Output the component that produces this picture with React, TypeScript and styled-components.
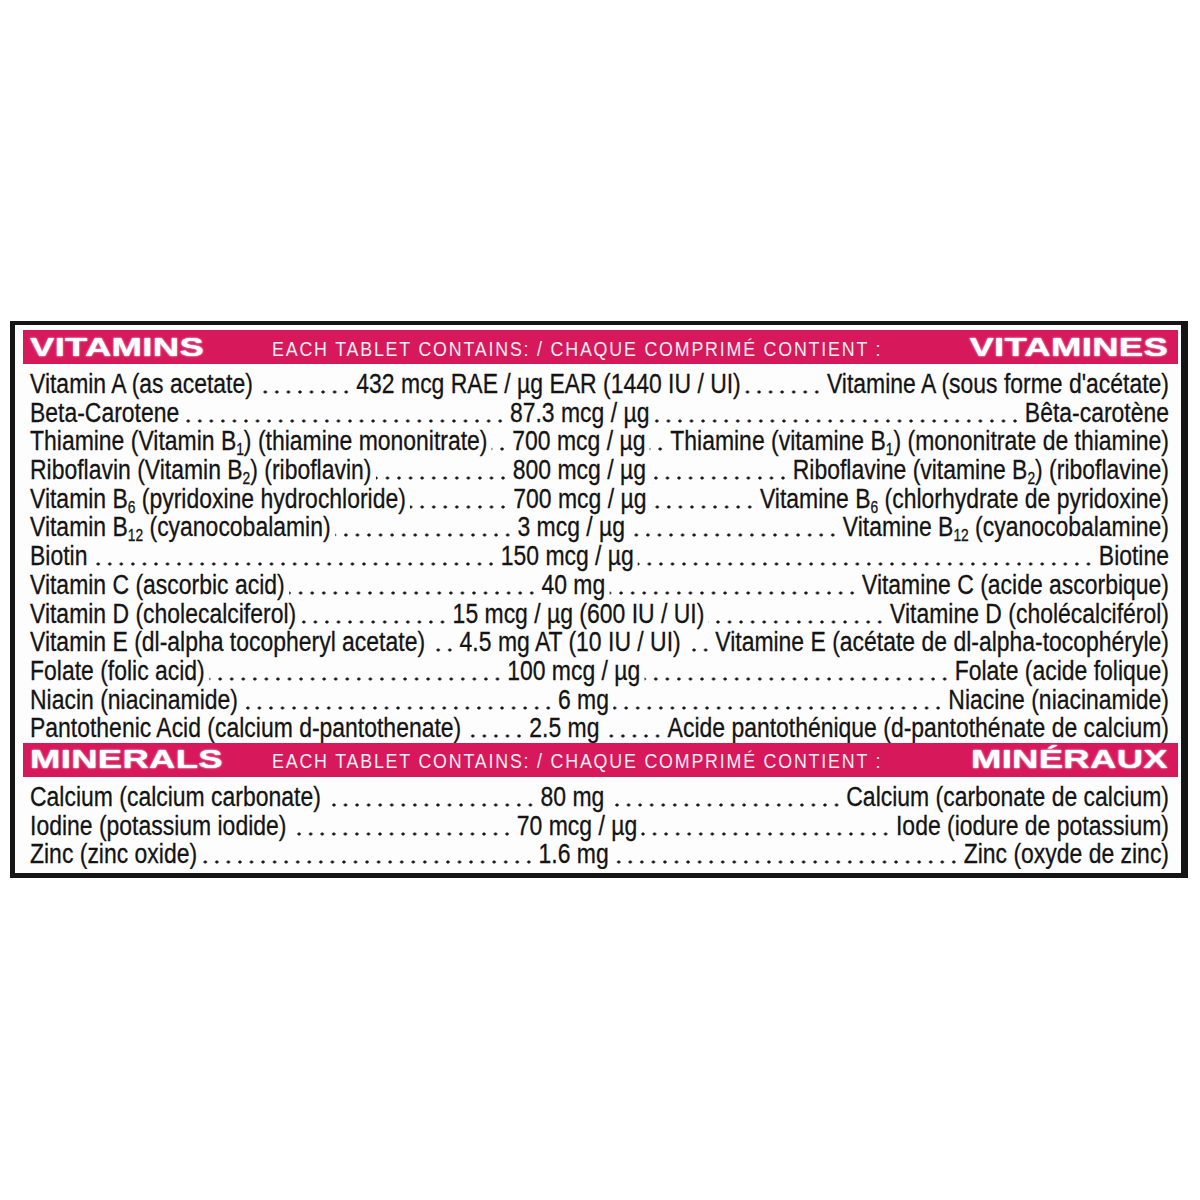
import React from 'react';
import styled, { createGlobalStyle } from 'styled-components';

const GlobalStyle = createGlobalStyle`
	body {
		margin: 0;
		background: #fff;
	}
`;

const PINK = '#d7185b';
const SANS = `'Liberation Sans', Arial, Helvetica, sans-serif`;
const SQUEEZE = 0.85; // condensed face is not installed, so the body type is narrowed by hand
const ROWS_WIDTH = 1139;

const Page = styled.div`
	width: 1200px;
	height: 1200px;
	padding: 321px 0 0 10px;
	box-sizing: border-box;
	background: #fff;
	overflow: hidden;
`;

const Panel = styled.div`
	width: 1178px;
	box-sizing: border-box;
	border: 5px solid #151515;
	border-right-width: 7px;
	border-top-width: 4px;
	padding: 5px 3px 4px 8px;
	background: #fdfdfd;
	font-family: ${SANS};
	color: #141414;
`;

const Header = styled.div`
	height: 34px;
	background: ${PINK};
	display: flex;
	align-items: center;
	padding: 0 10px 0 7px;
	color: #fff;
	overflow: hidden;
`;

const Title = styled.div<{ $right?: boolean }>`
	flex: none;
	width: ${(p) => (p.$right ? 'auto' : '242px')};
	margin-left: ${(p) => (p.$right ? 'auto' : '0')};
	font-family: ${SANS};
	font-weight: 900;
	font-size: 25px;
	line-height: 1;
	letter-spacing: 0.2px;
	transform: scaleX(1.46);
	transform-origin: ${(p) => (p.$right ? 'right center' : 'left center')};
	text-shadow: 0 0 1px rgba(255, 255, 255, 0.9), 0 0 2px rgba(255, 220, 235, 0.7);
	white-space: nowrap;
`;

const Subtitle = styled.div`
	flex: none;
	font-size: 21px;
	letter-spacing: 2.1px;
	line-height: 1;
	color: #fbeef3;
	white-space: nowrap;
	padding-top: 2px;
	transform: scaleX(${SQUEEZE});
	transform-origin: left center;
`;

const Rows = styled.div`
	padding: 6px 10px 0 7px;
	overflow: hidden;
`;

const Squeezed = styled.div`
	width: ${ROWS_WIDTH / SQUEEZE}px;
	transform: scaleX(${SQUEEZE});
	transform-origin: left top;
`;

const Row = styled.div`
	display: flex;
	align-items: stretch;
	height: 28.7px;
	font-size: 27px;
	line-height: 28.7px;
	white-space: nowrap;
	-webkit-text-stroke: 0.3px #141414;
`;

const Cell = styled.span`
	flex: none;
`;

const Leader = styled.span<{ $grow: number }>`
	flex: ${(p) => p.$grow} 1 0;
	min-width: 0;
	margin: 0 5px;
	background-image: radial-gradient(ellipse 2.1px 1.75px at center, #161616 78%, transparent 100%);
	background-size: 13.6px 6px;
	background-repeat: repeat-x;
	background-position: right 0 top 19px;
`;

const Sub = styled.sub`
	font-size: 0.6em;
	vertical-align: -0.28em;
	line-height: 0;
`;

interface Item {
	name: React.ReactNode;
	amount: string;
	nom: React.ReactNode;
	lead?: number;
}

const vitamins: Item[] = [
	{ name: 'Vitamin A (as acetate)', amount: '432 mcg RAE / µg EAR (1440 IU / UI)', nom: "Vitamine A (sous forme d'acétate)", lead: 1.1 },
	{ name: 'Beta-Carotene', amount: '87.3 mcg / µg', nom: 'Bêta-carotène', lead: 0.935 },
	{
		name: <>Thiamine (Vitamin B<Sub>1</Sub>) (thiamine mononitrate)</>,
		amount: '700 mcg / µg',
		nom: <>Thiamine (vitamine B<Sub>1</Sub>) (mononitrate de thiamine)</>
	},
	{
		name: <>Riboflavin (Vitamin B<Sub>2</Sub>) (riboflavin)</>,
		amount: '800 mcg / µg',
		nom: <>Riboflavine (vitamine B<Sub>2</Sub>) (riboflavine)</>,
		lead: 0.98
	},
	{
		name: <>Vitamin B<Sub>6</Sub> (pyridoxine hydrochloride)</>,
		amount: '700 mcg / µg',
		nom: <>Vitamine B<Sub>6</Sub> (chlorhydrate de pyridoxine)</>,
		lead: 0.97
	},
	{
		name: <>Vitamin B<Sub>12</Sub> (cyanocobalamin)</>,
		amount: '3 mcg / µg',
		nom: <>Vitamine B<Sub>12</Sub> (cyanocobalamine)</>,
		lead: 0.92
	},
	{ name: 'Biotin', amount: '150 mcg / µg', nom: 'Biotine', lead: 0.94 },
	{ name: 'Vitamin C (ascorbic acid)', amount: '40 mg', nom: 'Vitamine C (acide ascorbique)' },
	{ name: 'Vitamin D (cholecalciferol)', amount: '15 mcg / µg (600 IU / UI)', nom: 'Vitamine D (cholécalciférol)', lead: 0.91 },
	{ name: 'Vitamin E (dl-alpha tocopheryl acetate)', amount: '4.5 mg AT (10 IU / UI)', nom: 'Vitamine E (acétate de dl-alpha-tocophéryle)' },
	{ name: 'Folate (folic acid)', amount: '100 mcg / µg', nom: 'Folate (acide folique)', lead: 0.98 },
	{ name: 'Niacin (niacinamide)', amount: '6 mg', nom: 'Niacine (niacinamide)', lead: 0.97 },
	{ name: 'Pantothenic Acid (calcium d-pantothenate)', amount: '2.5 mg', nom: 'Acide pantothénique (d-pantothénate de calcium)' }
];

const minerals: Item[] = [
	{ name: 'Calcium (calcium carbonate)', amount: '80 mg', nom: 'Calcium (carbonate de calcium)', lead: 0.95 },
	{ name: 'Iodine (potassium iodide)', amount: '70 mcg / µg', nom: 'Iode (iodure de potassium)', lead: 0.94 },
	{ name: 'Zinc (zinc oxide)', amount: '1.6 mg', nom: 'Zinc (oxyde de zinc)', lead: 0.98 }
];

const SectionHeader: React.FC<{ en: string; fr: string }> = ({ en, fr }) => (
	<Header>
		<Title>{en}</Title>
		<Subtitle>EACH TABLET CONTAINS: / CHAQUE COMPRIMÉ CONTIENT :</Subtitle>
		<Title $right>{fr}</Title>
	</Header>
);

const NutrientRow: React.FC<{ item: Item }> = ({ item }) => {
	const lead = item.lead ?? 1;
	return (
		<Row>
			<Cell>{item.name}</Cell>
			<Leader $grow={lead} />
			<Cell>{item.amount}</Cell>
			<Leader $grow={2 - lead} />
			<Cell>{item.nom}</Cell>
		</Row>
	);
};

const Section: React.FC<{ items: Item[] }> = ({ items }) => (
	<Rows>
		<Squeezed>
			{items.map((item, i) => (
				<NutrientRow key={i} item={item} />
			))}
		</Squeezed>
	</Rows>
);

export default function App() {
	return (
		<Page>
			<GlobalStyle />
			<Panel>
				<SectionHeader en="VITAMINS" fr="VITAMINES" />
				<Section items={vitamins} />
				<SectionHeader en="MINERALS" fr="MINÉRAUX" />
				<Section items={minerals} />
			</Panel>
		</Page>
	);
}
